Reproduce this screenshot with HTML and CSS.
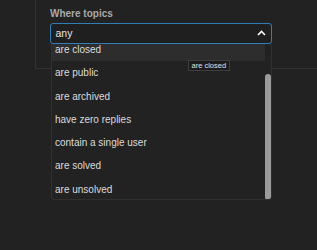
FILE: index.html
```html
<!DOCTYPE html>
<html>
<head>
<meta charset="utf-8">
<link rel="stylesheet" href="styles.css">
</head>
<body>
<div class="card">
  <div class="label">Where topics</div>
  <div class="field">
    <div class="select">
      <span class="value">any</span>
      <svg class="chev" width="9" height="6" viewBox="0 0 9 6"><polyline points="1,5 4.5,1.5 8,5" fill="none" stroke="#fff" stroke-width="1.6"/></svg>
    </div>
    <div class="dropdown">
      <ul class="list">
        <li class="item active">are closed</li>
        <li class="item">are public</li>
        <li class="item">are archived</li>
        <li class="item">have zero replies</li>
        <li class="item">contain a single user</li>
        <li class="item">are solved</li>
        <li class="item">are unsolved</li>
      </ul>
      <div class="thumb"></div>
    </div>
    <div class="tooltip">are closed</div>
  </div>
</div>
</body>
</html>
```
FILE: styles.css
```css
html, body {
  margin: 0;
  padding: 0;
  background: #222222;
  font-family: "Liberation Sans", Arial, sans-serif;
  height: 250px;
  overflow: hidden;
}
.card {
  margin-left: 35px;
  height: 69px;
  box-sizing: border-box;
  border-left: 1px solid #333333;
  border-bottom: 1px solid #333333;
  padding: 8px 0 0 14px;
}
.label {
  font-size: 10px;
  font-weight: bold;
  color: #a9a9a9;
  line-height: 12px;
  height: 14.5px;
}
.field {
  position: relative;
  width: 222px;
}
.select {
  height: 21.5px;
  box-sizing: border-box;
  border: 1.5px solid #2f7eb6;
  border-radius: 3px;
  background: #1f1f1f;
  display: flex;
  align-items: center;
  justify-content: space-between;
  padding: 0 5px 0 4.5px;
}
.value {
  font-size: 10.5px;
  color: #e6e6e6;
}
.chev {
  display: block;
  margin-top: -1px;
}
.dropdown {
  position: absolute;
  left: 1px;
  top: 21.5px;
  width: 221px;
  height: 156px;
  box-sizing: border-box;
  border: 1px solid #303030;
  border-top: none;
  border-radius: 0 0 3px 3px;
  background: #222222;
  overflow: hidden;
}
.list {
  list-style: none;
  margin: -6px 6px 0 0;
  padding: 0;
}
.item {
  height: 23.3px;
  line-height: 23.3px;
  font-size: 10px;
  color: #dcdcdc;
  padding-left: 3px;
}
.item.active {
  background: #2d2d2d;
}
.thumb {
  position: absolute;
  right: 0;
  top: 30px;
  width: 6px;
  height: 126px;
  border-radius: 3px;
  background: #9b9b9b;
}
.tooltip {
  position: absolute;
  left: 138px;
  top: 37.5px;
  height: 11px;
  box-sizing: border-box;
  padding: 0 2.5px;
  border: 1px solid #3e3e3e;
  background: #1c1c1c;
  color: #e0e0e0;
  font-size: 7.5px;
  line-height: 9px;
}
```
